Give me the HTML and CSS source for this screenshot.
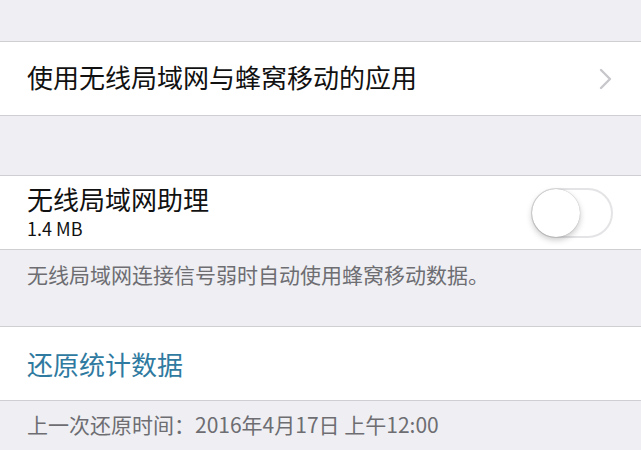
FILE: index.html
```html
<!DOCTYPE html>
<html lang="zh-CN">
<head>
<meta charset="utf-8">
<link rel="stylesheet" href="styles.css">
</head>
<body>
<div class="screen">
  <div class="group first">
    <div class="row">
      <span class="label">使用无线局域网与蜂窝移动的应用</span>
      <svg class="chevron" width="14" height="22" viewBox="0 0 14 22"><path d="M2 2 L11 11 L2 20" fill="none" stroke="#c7c7cc" stroke-width="2.4" stroke-linecap="round" stroke-linejoin="round"/></svg>
    </div>
  </div>
  <div class="group second">
    <div class="row">
      <div class="stack">
        <span class="label">无线局域网助理</span>
        <span class="sub">1.4 MB</span>
      </div>
      <div class="toggle"><div class="knob"></div></div>
    </div>
  </div>
  <div class="note note-mid">无线局域网连接信号弱时自动使用蜂窝移动数据。</div>
  <div class="group">
    <div class="row">
      <span class="label blue">还原统计数据</span>
    </div>
  </div>
  <div class="note">上一次还原时间：2016年4月17日 上午12:00</div>
</div>
</body>
</html>
```
FILE: styles.css
```css
html, body {
  margin: 0;
  padding: 0;
  background: #efeff3;
  font-family: "Noto Sans CJK SC", "Noto Sans", sans-serif;
}
.screen {
  width: 641px;
  height: 450px;
  overflow: hidden;
  padding-top: 41px;
  box-sizing: border-box;
}
.group {
  background: #fff;
  border-top: 1px solid #cfced3;
  border-bottom: 1px solid #cfced3;
}
.second {
  margin-top: 59px;
}
.row {
  height: 73px;
  display: flex;
  align-items: center;
  justify-content: space-between;
  padding: 0 28px 0 27px;
}
.label {
  font-size: 26px;
  color: #111;
  line-height: 1;
}
.first .label {
  margin-top: -3px;
}
.blue {
  color: #2f7aa0;
}
.stack {
  display: flex;
  flex-direction: column;
  gap: 7px;
  margin-top: -2px;
}
.sub {
  font-size: 18px;
  color: #111;
  line-height: 1;
}
.toggle {
  width: 82px;
  height: 50px;
  border-radius: 25px;
  border: 2px solid #e4e4e6;
  box-sizing: border-box;
  position: relative;
  background: #fff;
}
.knob {
  position: absolute;
  left: -1px;
  top: -1px;
  width: 48px;
  height: 48px;
  border-radius: 50%;
  background: #fff;
  box-shadow: 0 3px 6px rgba(0,0,0,0.22), 0 0 1px rgba(0,0,0,0.35);
}
.note {
  font-size: 21px;
  color: #6d6d72;
  padding: 9px 27px 0;
  height: 76px;
  box-sizing: border-box;
  line-height: 28px;
}
.note-mid {
  padding-top: 10px;
}
```
